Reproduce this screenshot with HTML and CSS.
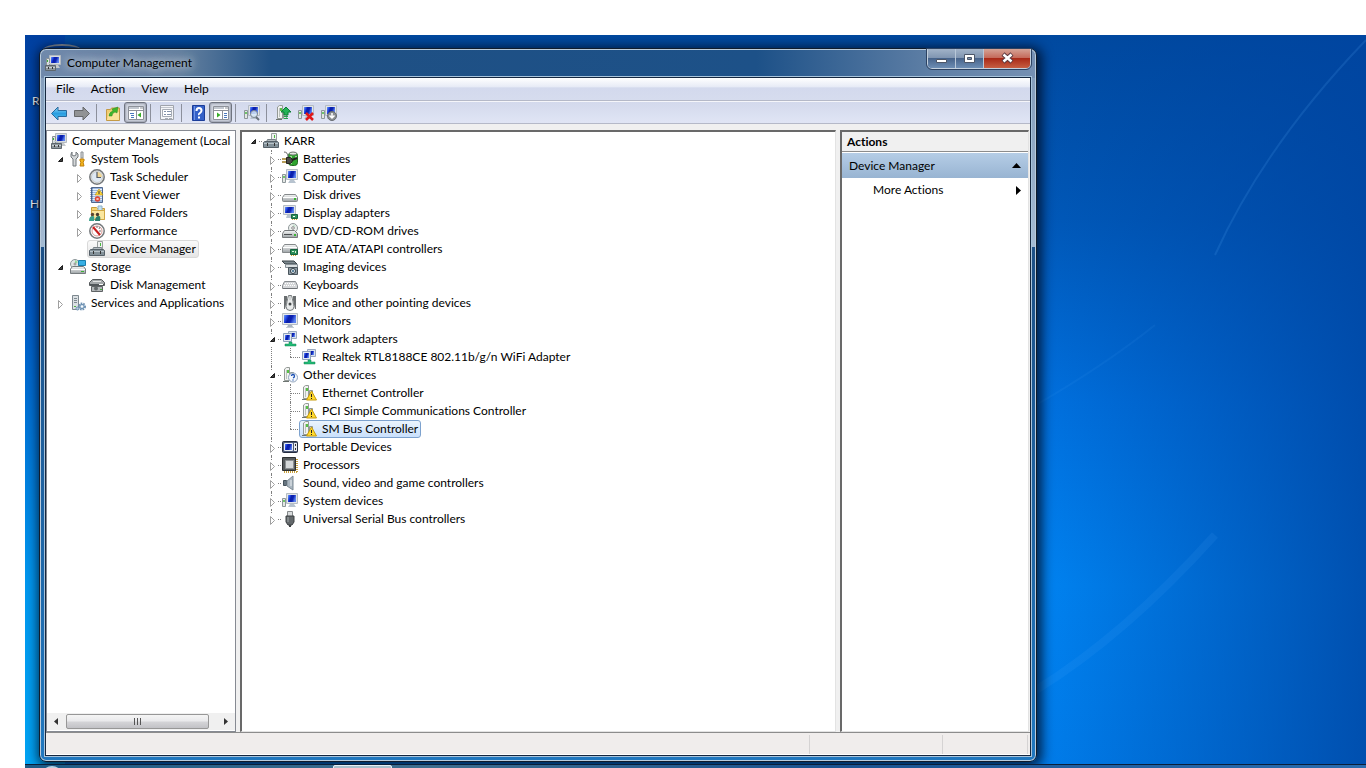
FILE: index.html
```
<!DOCTYPE html>
<html lang="en">
<head>
    <meta charset="utf-8">
    <title>Computer Management</title>
    <link rel="stylesheet" href="styles.css">
</head>
<body>
    <!-- icons -->
    <svg class="sprite" width="0" height="0" aria-hidden="true">
        <defs>
            <linearGradient id="screen" x1="0" y1="0" x2="1" y2="0.3">
                <stop offset="0" stop-color="#6f9cf2"/><stop offset="0.3" stop-color="#1c3fe0"/><stop offset="0.45" stop-color="#0a1fa8"/><stop offset="0.7" stop-color="#0c22b4"/><stop offset="1" stop-color="#5a82f0"/>
            </linearGradient>
            <linearGradient id="metal" x1="0" y1="0" x2="0" y2="1">
                <stop offset="0" stop-color="#f6f7f7"/><stop offset="1" stop-color="#9da3a6"/>
            </linearGradient>
            <linearGradient id="blue" x1="0" y1="0" x2="0" y2="1">
                <stop offset="0" stop-color="#8fdcfb"/><stop offset="0.5" stop-color="#2a9de0"/><stop offset="1" stop-color="#4cc0f2"/>
            </linearGradient>
        </defs>
        <symbol id="i-open" viewBox="0 0 16 16"><path d="M11.500 6.500v4h-4z" fill="#404040" stroke="#1c1c1c"/></symbol>
        <symbol id="i-closed" viewBox="0 0 16 16"><path d="M7.500 5.500v8l4-4z" fill="#fff" stroke="#a0a0a0"/></symbol>
        <symbol id="i-mgmt" viewBox="0 0 16 16">
            <path d="M4.500.5h11v9h-11z" fill="#d9dde0" stroke="#b4bac0"/><path d="M6 2h8v6H6z" fill="url(#screen)"/>
            <path d="M1.500 3.500h3v7h-3z" fill="#dfe2e3" stroke="#8b9398"/><path d="M2 5h1v2H2z" fill="#35b235"/>
            <path d="M8 10h5l2 3H8z" fill="#c5c9cc"/><path d="M.5 10.500h10v5H.5z" fill="#8e979d" stroke="#5e676d"/><path d="M3 10V8.500h5V10M1 12.500h9" fill="none" stroke="#c9d0d4"/><path d="M3 12h1v2H3zM7 12h1v2H7z" fill="#333"/>
        </symbol>
        <symbol id="i-tools" viewBox="0 0 16 16">
            <path d="M2 1v3l2 1 2-1V1l2 2v3L6 8v7H3V8L1 6V3z" fill="#d4d7d9" stroke="#73797d"/>
            <path d="M11 1h2v6h-2z" fill="#dfe1e3" stroke="#8a8f92"/><path d="M10 8h4v2l-1 1 1 4h-4l1-4-1-1z" fill="#f3b51c" stroke="#c07f0a"/>
        </symbol>
        <symbol id="i-clock" viewBox="0 0 16 16">
            <circle cx="8" cy="8" r="7.200" fill="#f3f0e4" stroke="#73777b" stroke-width="1.500"/><circle cx="8" cy="8" r="5.500" fill="#dfe9f3" stroke="#c5c9cd"/>
            <path d="M8 8V3a5 5 0 0 1 5 5z" fill="#f2d794"/><path d="M8 3v5.500h4" fill="none" stroke="#555c66" stroke-width="1.200"/>
        </symbol>
        <symbol id="i-event" viewBox="0 0 16 16">
            <path d="M2.500.5h11v15h-11z" fill="#9db9df" stroke="#51688e"/><path d="M4 2.500h9M4 4.500h9M4 6.500h9M4 8.500h9M4 10.500h9M4 12.500h9" stroke="#e6effa"/><path d="M2.500 1v14" stroke="#415a85" stroke-width="2" stroke-dasharray="1 1"/>
            <path d="M10 2l4 6H6z" fill="#ffd83a" stroke="#b68b10" stroke-width=".6"/><path d="M10 4v3" stroke="#333"/><circle cx="8.500" cy="12" r="2.700" fill="#e04434"/><path d="M7.500 11l2 2m0-2l-2 2" stroke="#fff" stroke-width=".8"/>
        </symbol>
        <symbol id="i-share" viewBox="0 0 16 16">
            <path d="M2.500 2.500h5l1 1h7v11h-13z" fill="#f3d374" stroke="#c69a38"/><path d="M9 1h4v5H9z" fill="#c3e3f5" stroke="#8fb0c5"/><path d="M2.500 5.500h13v9h-13z" fill="#fbe79f" stroke="#d0a846"/>
            <circle cx="3.500" cy="9.500" r="1.700" fill="#5c4630"/><circle cx="8.500" cy="9.500" r="1.700" fill="#4c3b2b"/><path d="M0 16q0-5 4-5 2 0 1 5z" fill="#3aa18d"/><path d="M6 16q0-5 4-5 2 0 1 5z" fill="#287f6c"/>
        </symbol>
        <symbol id="i-perf" viewBox="0 0 16 16">
            <circle cx="8" cy="8" r="7.200" fill="#fff" stroke="#74787b" stroke-width="1.500"/><circle cx="8" cy="8" r="5" fill="none" stroke="#d79a96"/><path d="M4 4l7 8" stroke="#c81e1e" stroke-width="2"/><path d="M8 3v2M11 4l-1 2M12 8h-2" stroke="#777"/>
        </symbol>
        <symbol id="i-device" viewBox="0 0 16 16">
            <path d="M8.500 7.500v-7h5v7z" fill="#eff1f0" stroke="#9a9f9f"/><path d="M11 2h1v3h-1z" fill="#48bb3e"/>
            <path d="M3.500 9l1-2.500h8l1 2.500" fill="#b3bbbf" stroke="#767f85"/><path d="M.5 9.500l1-1h13l1 1v5H.5z" fill="#84929a" stroke="#566169"/><path d="M1 10.500h14" stroke="#b9c4ca"/><path d="M4 10h1v3H4zM11 10h1v3h-1z" fill="#333"/>
        </symbol>
        <symbol id="i-storage" viewBox="0 0 16 16">
            <circle cx="5" cy="5" r="4.500" fill="#dfe6e6" stroke="#8c9799"/><path d="M5 1l3 2-3 2z" fill="#95d99c"/><circle cx="5" cy="5" r="1" fill="#fff" stroke="#888"/><path d="M8.500 1.500h7v5h-7z" fill="#37afe4" stroke="#1a7fad"/>
            <path d="M.5 10l2-2.500h11l2 2.500v4.500H.5z" fill="url(#metal)" stroke="#757b7e"/><path d="M1 10.500h14" stroke="#fff"/><path d="M11 12h3v1h-3z" fill="#3cb035"/>
        </symbol>
        <symbol id="i-disk" viewBox="0 0 16 16">
            <path d="M.5 5.500l3-3h9l3 3v3H.5z" fill="#a4a8aa" stroke="#55595b"/><path d="M4 4.500h8" stroke="#e4e5e5"/><path d="M1 7h14v2H1z" fill="#52575a"/><path d="M10 7h4v1h-4z" fill="#fff"/><path d="M2.500 9.500h11v5h-11z" fill="#b3b7b9" stroke="#5f6365"/><circle cx="7" cy="11.500" r="2" fill="#63696b"/><path d="M11 12h2v1h-2z" fill="#3cb035"/>
        </symbol>
        <symbol id="i-services" viewBox="0 0 16 16">
            <path d="M2.500.5h6v14h-6z" fill="#dbe0e3" stroke="#7d888f"/><path d="M4 3.500h3M4 5.500h3M4 7.500h3" stroke="#7e8a91"/><path d="M4 11h2v1H4z" fill="#49b43e"/>
            <circle cx="12" cy="11.500" r="3" fill="#d8e3ec" stroke="#6e91b2" stroke-width="2" stroke-dasharray="1.500 1"/><circle cx="12" cy="11.500" r="2.200" fill="#b6cde0" stroke="#6e91b2"/><circle cx="12" cy="11.500" r="1" fill="#fff"/><circle cx="7.500" cy="13.500" r="1.500" fill="#b6cde0" stroke="#6e91b2"/>
        </symbol>
        <symbol id="i-battery" viewBox="0 0 16 16">
            <rect x="6.500" y="1.500" width="9" height="13" rx="3" fill="#2fa32f" stroke="#216a22"/><ellipse cx="11" cy="2.500" rx="3.500" ry="1.500" fill="#e5ebe4" stroke="#777"/><path d="M9 5v8M14 5v3" stroke="#b7efae" stroke-width="1.500"/>
            <path d="M2 1q4 0 4 5" fill="none" stroke="#666"/><path d="M4.500 6.500h4q4 3 0 6h-4z" fill="#4a4a47" stroke="#242421"/><path d="M0 8h4M0 11h4" stroke="#a07f24" stroke-width="1.500"/><path d="M10 9l5-2" stroke="#20201f" stroke-width="2"/>
        </symbol>
        <symbol id="i-computer" viewBox="0 0 16 16">
            <path d="M4.500.5h11v10h-11z" fill="#e2e5e8" stroke="#b5bcc4"/><path d="M6 2h8v7H6z" fill="url(#screen)"/><path d="M.5 5.500h3v8h-3z" fill="#e3e7e4" stroke="#8d9699"/><path d="M1 7h2v2H1z" fill="#6fc56a"/><path d="M8 11h4l2 3H6z" fill="#b7c3cf"/>
        </symbol>
        <symbol id="i-drive" viewBox="0 0 16 16">
            <path d="M.5 10.500l2-3h11l2 3v3q0 1-1 1h-13q-1 0-1-1z" fill="url(#metal)" stroke="#85898b"/><path d="M1 10.500h14" stroke="#fff"/><path d="M12 11h2v2h-2z" fill="#3bb534"/>
        </symbol>
        <symbol id="i-display" viewBox="0 0 16 16">
            <path d="M1.500.5h12v9h-12z" fill="#e2e5e8" stroke="#b5bcc4"/><path d="M3 2h9v6H3z" fill="url(#screen)"/><path d="M5 10h5v3H4z" fill="#b7c3cf"/><path d="M9.500 9.500h6v4h-6z" fill="#2b8f59" stroke="#176340"/><path d="M11 11h2v1h-2z" fill="#fff"/><path d="M10 14.500h5" stroke="#d3a92e" stroke-dasharray="1 1"/>
        </symbol>
        <symbol id="i-dvd" viewBox="0 0 16 16">
            <circle cx="11" cy="5" r="4.500" fill="#edf1ef" stroke="#8f9799"/><path d="M11 1l3 2-3 2z" fill="#c8e3d1"/><circle cx="11" cy="5" r="1.300" fill="#fff" stroke="#888"/>
            <path d="M.5 10.500l2-3h10l3 3v4H.5z" fill="url(#metal)" stroke="#76797b"/><path d="M2 11.500h8" stroke="#4b4e50"/><path d="M12 11h2v2h-2z" fill="#3bb534"/>
        </symbol>
        <symbol id="i-ide" viewBox="0 0 16 16">
            <path d="M.5 6.500l2-3h11l2 3v5H.5z" fill="url(#metal)" stroke="#85898b"/><path d="M1 6.500h14" stroke="#fff"/><path d="M8.500 8.500h7v5h-7z" fill="#2b8f59" stroke="#176340"/><path d="M10 10h2v1h-2zM13 10h1v2h-1z" fill="#d9f3d9"/><path d="M9 14.500h5" stroke="#d3a92e" stroke-dasharray="1 1"/>
        </symbol>
        <symbol id="i-imaging" viewBox="0 0 16 16">
            <path d="M0 2h12l3 3H3z" fill="#7d888e" stroke="#394247"/><path d="M3.500 5.500h12v3h-12z" fill="#dbe0e2" stroke="#879096"/><path d="M6.500 8.500h9v7h-9z" fill="#8f9ca5" stroke="#49545b"/><circle cx="11" cy="12" r="2.500" fill="#dfeaf0" stroke="#333e45"/><circle cx="11" cy="12" r="1" fill="#2f5e7d"/>
        </symbol>
        <symbol id="i-keyboard" viewBox="0 0 16 16">
            <path d="M2.500 4.500h11l2 4v3H.5v-3z" fill="#d4d6d8" stroke="#888c90"/><path d="M3 6.500h10M2 8.500h12" stroke="#fff" stroke-dasharray="1 1"/><path d="M1 11.500h14" stroke="#6f7377"/>
        </symbol>
        <symbol id="i-mouse" viewBox="0 0 16 16">
            <path d="M2 1h3v4l-2 9H2zM14 1h-3v4l2 9h1z" fill="#6a6e70"/><path d="M6.500.5h3q1 3 1.500 6t1 5q0 4-4 4t-4-4q.500-2 1-5t1.500-6z" fill="#e9ebeb" stroke="#777c7e"/><path d="M8 1v4" stroke="#b3b7b9"/><circle cx="8" cy="9" r="1.500" fill="#44484a"/>
        </symbol>
        <symbol id="i-monitor" viewBox="0 0 16 16">
            <path d="M.5.5h15v11H.5z" fill="#e6eaee" stroke="#b5bcc4"/><path d="M2 2h12v8H2z" fill="url(#screen)"/><path d="M6 12h4l1 2H5z" fill="#a9b5c1"/><path d="M4 14.500h8" stroke="#c4ccd4"/>
        </symbol>
        <symbol id="i-network" viewBox="0 0 16 16">
            <path d="M6.500.5h8v7h-8z" fill="#d9e2ee" stroke="#9aa9bf"/><path d="M8 2h5v4H8z" fill="url(#screen)"/><path d="M1.500 2.500h8v8h-8z" fill="#e4eaf2" stroke="#8fa0ba"/><path d="M3 4h5v5H3z" fill="url(#screen)"/><path d="M7 11h3v2h4v2H3v-2h4z" fill="#21bd77" stroke="#148350" stroke-width=".5"/>
        </symbol>
        <symbol id="i-card" viewBox="0 0 16 16">
            <path d="M2.500 13.500V2l2-1.500h3v13z" fill="#f1f2f1" stroke="#949a96"/><path d="M4.500 3v9" stroke="#bbc2bd"/><path d="M5 3h2v3H5z" fill="#57c145"/><path d="M1 14.500h6" stroke="#6e7572"/><path d="M8.500 5.500h3v8h-3z" fill="#dee2e0" stroke="#8f9893"/>
        </symbol>
        <symbol id="i-other" viewBox="0 0 16 16">
            <use href="#i-card"/><circle cx="11" cy="10.500" r="4.500" fill="#f4f8fd" stroke="#92a5bd"/><path d="M9.500 9q0-1.500 1.500-1.500T12.500 9 11 11M11 12.500v1" fill="none" stroke="#1d51b5" stroke-width="1.300"/>
        </symbol>
        <symbol id="i-warn" viewBox="0 0 16 16">
            <use href="#i-card"/><path d="M10.500 6l5 9h-10z" fill="#ffd92e" stroke="#c79b0c" stroke-linejoin="round"/><path d="M10.500 9v3M10.500 13v1" stroke="#222"/>
        </symbol>
        <symbol id="i-portable" viewBox="0 0 16 16">
            <rect x=".5" y="2.500" width="15" height="11" rx="1" fill="#4d5a77" stroke="#252d40"/><path d="M2.500 4.500h8v7h-8z" fill="url(#screen)" stroke="#e8edf5"/><path d="M12 4h3v8h-3z" fill="#e9ebef"/><path d="M13 5h1v2h-1zM13 9h1v2h-1z" fill="#333"/>
        </symbol>
        <symbol id="i-cpu" viewBox="0 0 16 16">
            <path d="M2 15h14M15 2v13" stroke="#c8a03c" stroke-width="2" stroke-dasharray="1 1"/><path d="M.5.5h13v13H.5z" fill="#565a5c" stroke="#2c2f31"/><path d="M3.500 3.500h8v8h-8z" fill="#d5d8d9" stroke="#8c9092"/>
        </symbol>
        <symbol id="i-sound" viewBox="0 0 16 16">
            <path d="M1.500 5.500h3v5h-3z" fill="#66747f" stroke="#43505a"/><path d="M5 6l6-5v14l-6-4z" fill="#aab6c0" stroke="#7d8a94"/><path d="M9 5v6" stroke="#e9edf0"/>
        </symbol>
        <symbol id="i-usb" viewBox="0 0 16 16">
            <path d="M5.500.5h5v5h-5z" fill="#d9dcdd" stroke="#85898b"/><path d="M4 5h8v6l-2 3H6l-2-3z" fill="#63686b" stroke="#3c4043"/><path d="M6 6v5" stroke="#a3a8ab"/><path d="M8 14v2" stroke="#3c4043" stroke-width="2"/>
        </symbol>
        <symbol id="i-back" viewBox="0 0 16 16"><path d="M.5 8.500L7 2v3.500h8.500v6H7V15z" fill="url(#blue)" stroke="#29699c" stroke-linejoin="round"/></symbol>
        <symbol id="i-forward" viewBox="0 0 16 16"><path d="M15.500 8.500L9 2v3.500H.5v6H9V15z" fill="#919395" stroke="#66686b" stroke-linejoin="round"/></symbol>
        <symbol id="i-up" viewBox="0 0 16 16">
            <path d="M1.500 4.500h4l1-1.500h8v12.500h-13z" fill="#f0cd72" stroke="#c49a45"/><path d="M2 15l2-8h10v8z" fill="#fbe29a"/><path d="M4 11q0-4 4-5L7 4l6-2-1 6-2-1q-3 1-3 4z" fill="#3fb52d" stroke="#2b8a1e" stroke-width=".5"/>
        </symbol>
        <symbol id="i-tree" viewBox="0 0 16 16">
            <path d="M.5 1.500h15v13H.5z" fill="#fff" stroke="#8d9199"/><path d="M1 3h10" stroke="#c3c8d0" stroke-width="2"/><path d="M12 3h3M1 5.500h14M8.500 6v8" stroke="#8d9199"/><path d="M2 8.500h4M3 10.500h3M3 12.500h3" stroke="#4b79be"/><path d="M13 7.500v5L9.500 10z" fill="#36ad27"/>
        </symbol>
        <symbol id="i-pane" viewBox="0 0 16 16">
            <path d="M.5 1.500h15v13H.5z" fill="#fff" stroke="#8d9199"/><path d="M1 3h10" stroke="#c3c8d0" stroke-width="2"/><path d="M12 3h3M1 5.500h14M9.500 6v8" stroke="#8d9199"/><path d="M11 8.500h3M11 10.500h3M11 12.500h3" stroke="#4b79be"/><path d="M4 7.500v5L7.500 10z" fill="#36ad27"/>
        </symbol>
        <symbol id="i-props" viewBox="0 0 16 16">
            <path d="M1.500.5h13v14h-13z" fill="#f4f5f8" stroke="#9fa3ab"/><path d="M2 2.500h12" stroke="#c1c5cd"/><path d="M3.500 4.500h9v7h-9z" fill="#fff" stroke="#a7acb5"/><path d="M5 6.500h2M8 6.500h4M5 9.500h2M8 9.500h4" stroke="#8291aa"/><path d="M6 13h3v1H6zM10 13h3v1h-3z" fill="#a7acb5"/>
        </symbol>
        <symbol id="i-help" viewBox="0 0 16 16"><path d="M2.500.5h12v15h-12z" fill="#3460c8" stroke="#1b3d99"/><path d="M4.500 1v14" stroke="#6f93e4"/><path d="M6.500 6q0-3 2.500-3t2.500 2.500Q11.500 7 10 8t-1 2M9 11.500v2" fill="none" stroke="#fff" stroke-width="2"/></symbol>
        <symbol id="i-scan" viewBox="0 0 16 16">
            <use href="#i-computer"/><circle cx="10" cy="9" r="3.500" fill="#d8ebfa" fill-opacity=".85" stroke="#7d8790"/><path d="M12 12l3 3" stroke="#68727b" stroke-width="2"/>
        </symbol>
        <symbol id="i-update" viewBox="0 0 16 16">
            <use href="#i-card"/><path d="M11 2l5 5h-3v3H9V7H6z" fill="#24b356" stroke="#0c7e35"/><path d="M9 11.500h4M9 13.500h4" stroke="#24a34f"/>
        </symbol>
        <symbol id="i-uninstall" viewBox="0 0 16 16"><use href="#i-computer"/><path d="M8 8l7 7m0-7l-7 7" stroke="#e01818" stroke-width="2.500"/></symbol>
        <symbol id="i-disable" viewBox="0 0 16 16"><use href="#i-computer"/><circle cx="11" cy="11" r="4.500" fill="#8b8f93" stroke="#686c70"/><path d="M11 8v5M8.500 10.500L11 13l2.500-2.500" fill="none" stroke="#fff" stroke-width="1.500"/></symbol>
    </svg>

    <div class="desktop">
        <svg class="wallpaper" viewBox="0 0 1341 733" preserveAspectRatio="none">
            <path d="M1341 5Q1240 110 1190 220" fill="none" stroke="#5cb4ff" stroke-opacity=".15" stroke-width="2"/>
            <path d="M1130 290Q1080 330 1011 370" fill="none" stroke="#5cb4ff" stroke-opacity=".08" stroke-width="2"/>
            <path d="M1011 655Q1100 600 1190 500" fill="none" stroke="#5cb4ff" stroke-opacity=".1" stroke-width="8"/>
        </svg>
        <span class="shortcut bin">R</span>
        <span class="shortcut home">H</span>
        <div class="bin-icon"></div>

        <div class="window">
            <div class="titlebar">
                <svg class="icon"><use href="#i-mgmt"/></svg>
                <h1>Computer Management</h1>
                <div class="controls">
                    <button class="min" aria-label="Minimize"><svg width="13" height="13"><path d="M1.500 7.500h10v3h-10z" fill="#fff" stroke="#4c5668"/></svg></button>
                    <button class="max" aria-label="Maximize"><svg width="13" height="13"><path d="M1.500 2.500h10v8h-10z" fill="#fff" stroke="#4c5668"/><path d="M4.500 5.500h4v2h-4z" fill="#7d93b0" stroke="#4c5668"/></svg></button>
                    <button class="close" aria-label="Close"><svg width="13" height="13"><path d="M2 2l9 8m0-8l-9 8" stroke="#5c3a40" stroke-width="4.500"/><path d="M2.500 2.500l8 7m0-7l-8 7" stroke="#fff" stroke-width="2.500"/></svg></button>
                </div>
            </div>

            <div class="client">
                <div class="menubar">
                    <button>File</button>
                    <button>Action</button>
                    <button>View</button>
                    <button>Help</button>
                </div>
                <div class="toolbar">
                    <button aria-label="Back"><svg class="icon"><use href="#i-back"/></svg></button>
                    <button aria-label="Forward"><svg class="icon"><use href="#i-forward"/></svg></button>
                    <span class="sep"></span>
                    <button aria-label="Up one level"><svg class="icon"><use href="#i-up"/></svg></button>
                    <button class="pressed" aria-label="Show console tree"><svg class="icon"><use href="#i-tree"/></svg></button>
                    <span class="sep"></span>
                    <button aria-label="Properties"><svg class="icon"><use href="#i-props"/></svg></button>
                    <span class="sep"></span>
                    <button aria-label="Help"><svg class="icon"><use href="#i-help"/></svg></button>
                    <button class="pressed" aria-label="Show action pane"><svg class="icon"><use href="#i-pane"/></svg></button>
                    <span class="sep"></span>
                    <button aria-label="Scan for hardware changes"><svg class="icon"><use href="#i-scan"/></svg></button>
                    <span class="sep"></span>
                    <button aria-label="Update driver"><svg class="icon"><use href="#i-update"/></svg></button>
                    <button aria-label="Uninstall"><svg class="icon"><use href="#i-uninstall"/></svg></button>
                    <button aria-label="Disable"><svg class="icon"><use href="#i-disable"/></svg></button>
                </div>

                <div class="panes">
                    <div class="pane console">
                        <ul class="tree">
                            <li><div class="row"><span class="item"><svg class="icon"><use href="#i-mgmt"/></svg>Computer Management (Local</span></div></li>
                            <li>
                                <div class="row"><button class="twist" aria-label="Collapse"><svg class="icon"><use href="#i-open"/></svg></button><span class="item"><svg class="icon"><use href="#i-tools"/></svg>System Tools</span></div>
                                <ul>
                                    <li><div class="row"><button class="twist" aria-label="Expand"><svg class="icon"><use href="#i-closed"/></svg></button><span class="item"><svg class="icon"><use href="#i-clock"/></svg>Task Scheduler</span></div></li>
                                    <li><div class="row"><button class="twist" aria-label="Expand"><svg class="icon"><use href="#i-closed"/></svg></button><span class="item"><svg class="icon"><use href="#i-event"/></svg>Event Viewer</span></div></li>
                                    <li><div class="row"><button class="twist" aria-label="Expand"><svg class="icon"><use href="#i-closed"/></svg></button><span class="item"><svg class="icon"><use href="#i-share"/></svg>Shared Folders</span></div></li>
                                    <li><div class="row"><button class="twist" aria-label="Expand"><svg class="icon"><use href="#i-closed"/></svg></button><span class="item"><svg class="icon"><use href="#i-perf"/></svg>Performance</span></div></li>
                                    <li><div class="row leaf"><span class="item current"><svg class="icon"><use href="#i-device"/></svg>Device Manager</span></div></li>
                                </ul>
                            </li>
                            <li>
                                <div class="row"><button class="twist" aria-label="Collapse"><svg class="icon"><use href="#i-open"/></svg></button><span class="item"><svg class="icon"><use href="#i-storage"/></svg>Storage</span></div>
                                <ul>
                                    <li><div class="row leaf"><span class="item"><svg class="icon"><use href="#i-disk"/></svg>Disk Management</span></div></li>
                                </ul>
                            </li>
                            <li><div class="row"><button class="twist" aria-label="Expand"><svg class="icon"><use href="#i-closed"/></svg></button><span class="item"><svg class="icon"><use href="#i-services"/></svg>Services and Applications</span></div></li>
                        </ul>
                        <div class="scrollbar">
                            <button aria-label="Scroll left"><svg width="5" height="7"><path d="M5 0v7L1 3.500z" fill="#333"/></svg></button>
                            <div class="track"><div class="thumb"><i></i><i></i><i></i></div></div>
                            <button aria-label="Scroll right"><svg width="5" height="7"><path d="M0 0v7l4-3.500z" fill="#333"/></svg></button>
                        </div>
                    </div>

                    <div class="pane devices">
                        <ul class="tree lines">
                            <li>
                                <div class="row"><button class="twist" aria-label="Collapse"><svg class="icon"><use href="#i-open"/></svg></button><span class="item"><svg class="icon"><use href="#i-device"/></svg>KARR</span></div>
                                <ul>
                                    <li><div class="row"><button class="twist" aria-label="Expand"><svg class="icon"><use href="#i-closed"/></svg></button><span class="item"><svg class="icon"><use href="#i-battery"/></svg>Batteries</span></div></li>
                                    <li><div class="row"><button class="twist" aria-label="Expand"><svg class="icon"><use href="#i-closed"/></svg></button><span class="item"><svg class="icon"><use href="#i-computer"/></svg>Computer</span></div></li>
                                    <li><div class="row"><button class="twist" aria-label="Expand"><svg class="icon"><use href="#i-closed"/></svg></button><span class="item"><svg class="icon"><use href="#i-drive"/></svg>Disk drives</span></div></li>
                                    <li><div class="row"><button class="twist" aria-label="Expand"><svg class="icon"><use href="#i-closed"/></svg></button><span class="item"><svg class="icon"><use href="#i-display"/></svg>Display adapters</span></div></li>
                                    <li><div class="row"><button class="twist" aria-label="Expand"><svg class="icon"><use href="#i-closed"/></svg></button><span class="item"><svg class="icon"><use href="#i-dvd"/></svg>DVD/CD-ROM drives</span></div></li>
                                    <li><div class="row"><button class="twist" aria-label="Expand"><svg class="icon"><use href="#i-closed"/></svg></button><span class="item"><svg class="icon"><use href="#i-ide"/></svg>IDE ATA/ATAPI controllers</span></div></li>
                                    <li><div class="row"><button class="twist" aria-label="Expand"><svg class="icon"><use href="#i-closed"/></svg></button><span class="item"><svg class="icon"><use href="#i-imaging"/></svg>Imaging devices</span></div></li>
                                    <li><div class="row"><button class="twist" aria-label="Expand"><svg class="icon"><use href="#i-closed"/></svg></button><span class="item"><svg class="icon"><use href="#i-keyboard"/></svg>Keyboards</span></div></li>
                                    <li><div class="row"><button class="twist" aria-label="Expand"><svg class="icon"><use href="#i-closed"/></svg></button><span class="item"><svg class="icon"><use href="#i-mouse"/></svg>Mice and other pointing devices</span></div></li>
                                    <li><div class="row"><button class="twist" aria-label="Expand"><svg class="icon"><use href="#i-closed"/></svg></button><span class="item"><svg class="icon"><use href="#i-monitor"/></svg>Monitors</span></div></li>
                                    <li>
                                        <div class="row"><button class="twist" aria-label="Collapse"><svg class="icon"><use href="#i-open"/></svg></button><span class="item"><svg class="icon"><use href="#i-network"/></svg>Network adapters</span></div>
                                        <ul>
                                            <li><div class="row leaf"><span class="item"><svg class="icon"><use href="#i-network"/></svg>Realtek RTL8188CE 802.11b/g/n WiFi Adapter</span></div></li>
                                        </ul>
                                    </li>
                                    <li>
                                        <div class="row"><button class="twist" aria-label="Collapse"><svg class="icon"><use href="#i-open"/></svg></button><span class="item"><svg class="icon"><use href="#i-other"/></svg>Other devices</span></div>
                                        <ul>
                                            <li><div class="row leaf"><span class="item"><svg class="icon"><use href="#i-warn"/></svg>Ethernet Controller</span></div></li>
                                            <li><div class="row leaf"><span class="item"><svg class="icon"><use href="#i-warn"/></svg>PCI Simple Communications Controller</span></div></li>
                                            <li><div class="row leaf"><span class="item selected"><svg class="icon"><use href="#i-warn"/></svg>SM Bus Controller</span></div></li>
                                        </ul>
                                    </li>
                                    <li><div class="row"><button class="twist" aria-label="Expand"><svg class="icon"><use href="#i-closed"/></svg></button><span class="item"><svg class="icon"><use href="#i-portable"/></svg>Portable Devices</span></div></li>
                                    <li><div class="row"><button class="twist" aria-label="Expand"><svg class="icon"><use href="#i-closed"/></svg></button><span class="item"><svg class="icon"><use href="#i-cpu"/></svg>Processors</span></div></li>
                                    <li><div class="row"><button class="twist" aria-label="Expand"><svg class="icon"><use href="#i-closed"/></svg></button><span class="item"><svg class="icon"><use href="#i-sound"/></svg>Sound, video and game controllers</span></div></li>
                                    <li><div class="row"><button class="twist" aria-label="Expand"><svg class="icon"><use href="#i-closed"/></svg></button><span class="item"><svg class="icon"><use href="#i-computer"/></svg>System devices</span></div></li>
                                    <li><div class="row"><button class="twist" aria-label="Expand"><svg class="icon"><use href="#i-closed"/></svg></button><span class="item"><svg class="icon"><use href="#i-usb"/></svg>Universal Serial Bus controllers</span></div></li>
                                </ul>
                            </li>
                        </ul>
                    </div>

                    <div class="pane actions">
                        <h2>Actions</h2>
                        <button class="group">Device Manager<svg width="9" height="5"><path d="M0 5l4.500-5L9 5z"/></svg></button>
                        <button class="more">More Actions<svg width="5" height="9"><path d="M0 0l5 4.500L0 9z"/></svg></button>
                    </div>
                </div>

                <div class="statusbar"><span></span><span></span><span></span></div>
            </div>
        </div>

        <div class="taskbar">
            <div class="orb"></div>
            <div class="task"></div>
        </div>
    </div>
</body>
</html>
```
FILE: styles.css
```
* {
    box-sizing: border-box;
}

body {
    margin: 0;
    background: #fff;
    font-family: Lato, "Open Sans", sans-serif;
    font-size: 12px;
    font-variant-ligatures: none;
    line-height: 18px;
    color: #000;
}

button {
    font: inherit;
    font-variant-ligatures: none;
    color: inherit;
    margin: 0;
    padding: 0;
    border: none;
    background: none;
}

ul {
    list-style: none;
    margin: 0;
    padding: 0;
}

svg {
    display: block;
    flex: none;
}

.sprite {
    position: absolute;
}

.icon {
    width: 16px;
    height: 16px;
}

/* desktop */
.desktop {
    position: relative;
    margin: 35px 0 0 25px;
    height: calc(100vh - 35px);
    overflow: hidden;
    background:
        linear-gradient(to bottom, #0040a0 0, #0058c4 35%, #0098f0 75%, #00a4f4 100%) 0 0 / 40px 100% no-repeat,
        linear-gradient(to right, transparent 76%, rgba(0, 68, 160, 0.8) 100%),
        linear-gradient(to bottom, #00499f 0%, #0058b8 25%, #0070de 50%, #0082f0 75%, #007cea 100%);
}

.wallpaper {
    position: absolute;
    inset: 0;
    width: 100%;
    height: 100%;
}

.shortcut {
    position: absolute;
    left: 7px;
    color: #fff;
    text-shadow: 1px 1px 2px #000;
}

.bin {
    top: 57px;
}

.home {
    top: 160px;
    left: 5px;
}

.bin-icon {
    position: absolute;
    left: 18px;
    top: 9px;
    width: 38px;
    height: 12px;
    border-top: 2px solid #8b9299;
    border-radius: 50%;
}

/* window */
.window {
    position: absolute;
    inset: 13px 329px 6px 14px;
    display: flex;
    flex-direction: column;
    padding: 0 5px 5px;
    border: 1px solid #101c2c;
    border-radius: 7px;
    box-shadow: inset 0 0 0 1px #b9cbdc, 2px 2px 12px 3px rgba(0, 10, 30, 0.8);
    background:
        linear-gradient(to bottom, #7f99b8 0, #a4bad2 100%) 0 0 / 100% 198px no-repeat,
        linear-gradient(to bottom, #1d5188 30%, #2078c0 100%);
}

.window::before {
    content: "";
    position: absolute;
    inset: 1px 1px auto;
    height: 28px;
    border-radius: 6px 6px 0 0;
    background: linear-gradient(to right, #7089ab 0, #64809f 140px, #1f5084 230px, #1d5188 72%, #6080a6 90%, #7590b3 100%);
}

.titlebar {
    position: relative;
    display: flex;
    align-items: center;
    height: 28px;
    flex: none;
}

.titlebar h1 {
    margin: 0 0 0 6px;
    font-size: 12px;
    font-weight: normal;
    text-shadow: 0 0 8px #fff, 0 0 12px rgba(255, 255, 255, 0.6);
}

.controls {
    display: flex;
    align-self: flex-start;
    margin-left: auto;
    height: 20px;
    border: 1px solid #c3d0de;
    border-top: none;
    border-radius: 0 0 5px 5px;
    outline: 1px solid #2c4262;
    overflow: hidden;
}

.controls button {
    display: flex;
    align-items: center;
    justify-content: center;
    width: 28px;
    border-right: 1px solid #b8c7d8;
    background: linear-gradient(to bottom, #a2b3c8 0, #8196b2 45%, #48648b 50%, #6c8db4 100%);
}

.controls .close {
    width: 46px;
    border-right: none;
    background: linear-gradient(to bottom, #d5a396 0, #c56c5c 45%, #a92a18 50%, #c65e42 100%);
}

.client {
    display: flex;
    flex-direction: column;
    flex: 1;
    min-height: 0;
    position: relative;
    border: 1px solid #15273f;
    outline: 1px solid #a8c4dc;
    background: #f0f0f0;
}

.menubar {
    display: flex;
    flex: none;
    height: 23px;
    padding: 2px;
    border-bottom: 1px solid #b5b9c8;
    background: linear-gradient(to bottom, #fff 0, #e7ebf6 40%, #d3d9ed 45%, #d6dcee 100%);
}

.menubar button {
    padding: 0 8px;
}

.toolbar {
    display: flex;
    align-items: center;
    flex: none;
    height: 23px;
    padding-left: 1px;
    border-top: 1px solid #f5f6fa;
    border-bottom: 1px solid #b5b9c8;
    background: linear-gradient(to bottom, #d3d9ec, #e0e5f5);
}

.toolbar button {
    display: flex;
    align-items: center;
    justify-content: center;
    width: 23px;
    height: 21px;
}

.toolbar .pressed {
    border: 1px solid #6f7480;
    border-radius: 3px;
    background: #d3d7e2;
    box-shadow: inset 0 0 2px 1px #9da2b0;
}

.sep {
    width: 8px;
    height: 18px;
    background: linear-gradient(#8c909c, #8c909c) 3px 0 / 1px 100% no-repeat;
}

/* panes */
.panes {
    display: grid;
    grid-template-columns: 190px 1fr 189px;
    gap: 4px;
    flex: 1;
    min-height: 0;
    padding: 6px 1px 0 0;
}

.pane {
    min-width: 0;
    overflow: hidden;
    background: #fff;
    border: 1px solid #868a92;
}

.console {
    display: flex;
    flex-direction: column;
}

.devices,
.actions {
    border: 1px solid #e3e3e3;
    border-top: 2px solid #696969;
    border-left: 2px solid #696969;
}

/* trees */
.tree {
    flex: 1;
    padding: 1px 0 0 4px;
    white-space: nowrap;
    overflow: hidden;
}

.lines {
    padding: 0 0 0 2px;
}

.tree ul {
    padding-left: 19px;
}

.tree li {
    position: relative;
}

.row {
    display: flex;
    align-items: center;
    height: 18px;
}

.leaf {
    padding-left: 19px;
}

.twist {
    position: relative;
    z-index: 1;
    width: 19px;
    height: 16px;
}

.item {
    position: relative;
    z-index: 1;
    display: flex;
    align-items: center;
    gap: 5px;
    height: 18px;
    margin-left: -2px;
    padding: 0 2px 0 1px;
    border: 1px solid transparent;
    border-radius: 3px;
}

.current {
    border-color: #d9d9d9;
    background: linear-gradient(to bottom, #fafafa, #e5e5e5);
}

.selected {
    border-color: #7da2ce;
    background: linear-gradient(to bottom, #ebf4fd, #c9e0fc);
}

.lines ul li::before {
    content: "";
    position: absolute;
    left: 8px;
    top: 0;
    bottom: 0;
    border-left: 1px dotted #808080;
}

.lines ul li:last-child::before {
    bottom: auto;
    height: 9px;
}

.lines li::after {
    content: "";
    position: absolute;
    left: 8px;
    top: 9px;
    width: 10px;
    border-top: 1px dotted #808080;
}

/* keeps the dotted lines clear of the arrow */
.lines .twist::before {
    content: "";
    position: absolute;
    left: 4px;
    top: 3px;
    width: 10px;
    height: 12px;
    background: #fff;
}

.lines .twist .icon {
    position: relative;
}

.scrollbar {
    display: flex;
    align-items: center;
    flex: none;
    height: 17px;
    margin-bottom: 1px;
    background: #f0f0f0;
}

.scrollbar button {
    display: flex;
    align-items: center;
    justify-content: center;
    width: 17px;
    height: 17px;
}

.track {
    flex: 1;
    display: flex;
    padding: 0 2px;
}

.thumb {
    display: flex;
    align-items: center;
    justify-content: center;
    gap: 2px;
    width: 95%;
    height: 15px;
    border: 1px solid #979797;
    border-radius: 2px;
    background: linear-gradient(to bottom, #f5f5f5 0, #e9e9eb 48%, #d5d5d8 52%, #c2c2c6 100%);
}

.thumb i {
    width: 1px;
    height: 7px;
    background: #555;
}

/* actions pane */
.actions h2 {
    margin: 0;
    height: 20px;
    padding: 1px 0 0 5px;
    border-bottom: 1px solid #8c8c8c;
    background: #f0f0f0;
    font-size: 12px;
    font-weight: bold;
}

.actions button {
    display: flex;
    align-items: center;
    justify-content: space-between;
    width: 100%;
    padding: 0 7px;
}

.actions .group {
    height: 25px;
    margin-top: 1px;
    background: linear-gradient(to bottom, #b5cde6, #98b4d2);
}

.actions .more {
    height: 24px;
    padding-left: 31px;
}

.statusbar {
    display: grid;
    grid-template-columns: 1fr 133px 85px;
    flex: none;
    height: 23px;
    padding-right: 2px;
    border-top: 1px solid #8c8c8c;
    border-bottom: 1px solid #fff;
    background: #f0edec;
}

.statusbar span {
    margin-top: 2px;
    border-right: 1px solid #d5d3d3;
}

/* taskbar */
.taskbar {
    position: absolute;
    inset: auto 0 0;
    height: 4px;
    border-top: 1px solid #0b1f3a;
    background: linear-gradient(to right, #1d5a86, #3f6e8f 30%, #1b5391 60%, #2a6cae);
    overflow: hidden;
}

.orb {
    position: absolute;
    left: 16px;
    top: 1px;
    width: 22px;
    height: 22px;
    border-radius: 50%;
    background: #bcd3e4;
}

.task {
    position: absolute;
    left: 308px;
    top: 0;
    width: 59px;
    height: 12px;
    border: 1px solid #e6eff5;
    border-radius: 2px;
    background: #a9bfcc;
}
```
